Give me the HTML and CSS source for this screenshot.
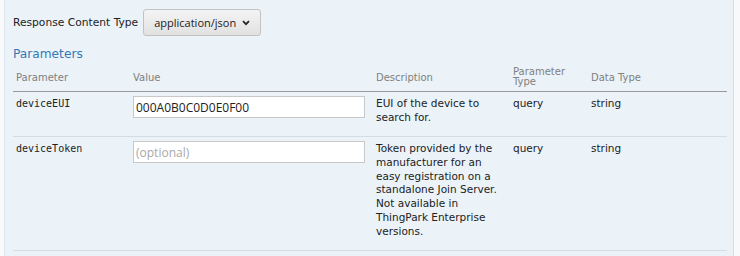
FILE: index.html
```html
<!DOCTYPE html>
<html>
<head>
    <title>Get device</title>
    <link rel="stylesheet" href="styles.css">
</head>
<body>
    <div class="content">
        <div class="response-type">
            <label class="response-label">Response Content Type</label>
            <div class="select-box">
                <span>application/json</span>
                <svg class="chevron" width="8" height="6" viewBox="0 0 8 6"><path d="M1 1.2 L4 4.2 L7 1.2" fill="none" stroke="#222" stroke-width="1.7"/></svg>
            </div>
        </div>

        <h4 class="params-title">Parameters</h4>
        <table class="params-table">
            <thead>
                <tr>
                    <th class="col-name">Parameter</th>
                    <th class="col-value">Value</th>
                    <th class="col-desc">Description</th>
                    <th class="col-ptype">Parameter<br>Type</th>
                    <th class="col-dtype">Data Type</th>
                </tr>
            </thead>
            <tbody>
                <tr>
                    <td class="code">deviceEUI</td>
                    <td><input class="param-input" type="text" value="000A0B0C0D0E0F00"></td>
                    <td>EUI of the device to search for.</td>
                    <td>query</td>
                    <td>string</td>
                </tr>
                <tr>
                    <td class="code">deviceToken</td>
                    <td><input class="param-input" type="text" placeholder="(optional)"></td>
                    <td>Token provided by the manufacturer for an easy registration on a standalone Join Server. Not available in ThingPark Enterprise versions.</td>
                    <td>query</td>
                    <td>string</td>
                </tr>
            </tbody>
        </table>
    </div>
</body>
</html>
```

FILE: styles.css
```css
body {
    margin: 0;
    background: #f7f9fb;
    font-family: "DejaVu Sans", sans-serif;
    color: #333;
}
.content {
    margin: 0 6px 0 4px;
    border-left: 1px solid #dbe6ef;
    border-right: 1px solid #cfdeea;
    background-color: #ebf3f9;
    padding: 9px 7px 0 8px;
    height: 256px;
    box-sizing: border-box;
}
.response-type {
    display: flex;
    align-items: center;
    gap: 5px;
}
.response-label {
    font-size: 10.7px;
    color: #222;
}
.select-box {
    display: flex;
    align-items: center;
    gap: 6px;
    width: 118px;
    height: 27px;
    box-sizing: border-box;
    padding: 0 7px 0 10px;
    border: 1px solid #c2c2c2;
    border-radius: 3px;
    background: linear-gradient(#f4f4f4, #e1e1e1);
    font-family: "Open Sans", sans-serif;
    font-size: 11px;
    color: #222;
}
.chevron {
    margin-top: 1px;
}
.params-title {
    margin: 11px 0 5px 0;
    font-size: 12.2px;
    font-weight: normal;
    color: #3478b6;
}
.params-table {
    width: 714px;
    border-collapse: collapse;
    font-size: 10.5px;
    color: #222;
}
.params-table th {
    text-align: left;
    font-weight: normal;
    font-size: 10px;
    color: #808080;
    height: 22px;
    padding: 0 3px 3px 3px;
    border-bottom: 1px solid #999;
    vertical-align: middle;
    line-height: 11px;
}
.params-table th.col-ptype {
    line-height: 10px;
}
.col-name { width: 111px; }
.col-value { width: 237px; }
.col-desc { width: 131px; }
.col-ptype { width: 72px; }
.params-table td {
    vertical-align: top;
    padding: 5px 3px 0 3px;
    line-height: 13.8px;
    border-bottom: 1px solid #d4dde5;
}
.params-table tbody tr:first-child td {
    height: 39px;
}
.params-table tbody tr:last-child td {
    height: 108px;
}
.code {
    font-family: "DejaVu Sans Mono", monospace;
    font-size: 10px;
}
.param-input {
    display: block;
    width: 232px;
    height: 22px;
    box-sizing: border-box;
    margin-top: -1px;
    padding: 0 2px;
    border: 1px solid #c8c8c8;
    background: #fff;
    font-family: "Open Sans", sans-serif;
    font-size: 12px;
    color: #222;
}
.param-input::placeholder {
    color: #a8a8a8;
}
```
